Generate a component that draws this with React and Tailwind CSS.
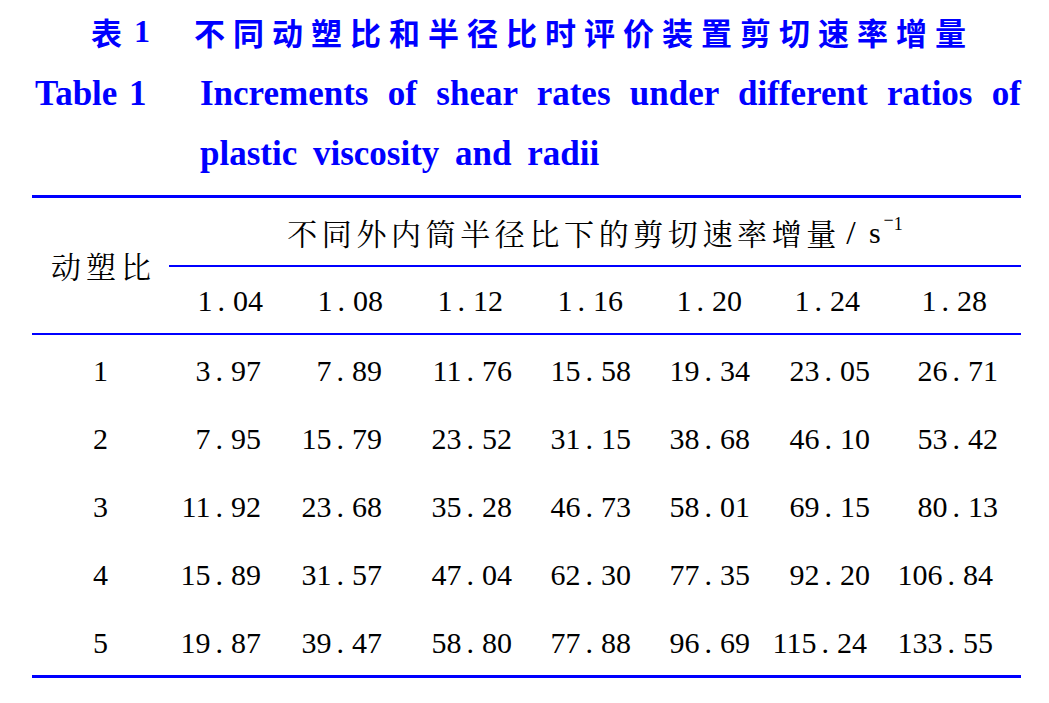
import React from "react";

const BLUE = "bg-[#0000ff]";

const headers = ["1.04", "1.08", "1.12", "1.16", "1.20", "1.24", "1.28"];
const rows = [
  ["1", "3.97", "7.89", "11.76", "15.58", "19.34", "23.05", "26.71"],
  ["2", "7.95", "15.79", "23.52", "31.15", "38.68", "46.10", "53.42"],
  ["3", "11.92", "23.68", "35.28", "46.73", "58.01", "69.15", "80.13"],
  ["4", "15.89", "31.57", "47.04", "62.30", "77.35", "92.20", "106.84"],
  ["5", "19.87", "39.47", "58.80", "77.88", "96.69", "115.24", "133.55"],
];

const padData = ["pr-[28px]", "pr-[27px]", "pr-[17px]", "pr-[18px]", "pr-[19px]", "pr-[19px]", "pr-[11px]"];
const padData6 = ["pr-[28px]", "pr-[27px]", "pr-[17px]", "pr-[18px]", "pr-[19px]", "pr-[22px]", "pr-[16px]"];
const padHead = ["pr-[26px]", "pr-[26px]", "pr-[26px]", "pr-[26px]", "pr-[27px]", "pr-[29px]", "pr-[22px]"];

function Num({ s }) {
  return (
    <span className="whitespace-nowrap">
      {s.split("").map((c, i) =>
        c === "." ? (
          <span key={i} className="inline-block pl-[5px] pr-[8px]">.</span>
        ) : (
          <span key={i}>{c}</span>
        )
      )}
    </span>
  );
}

export default function App() {
  return (
    <div className="w-[1049px] h-[703px] bg-white overflow-hidden text-black">
      {/* Chinese title */}
      <div className="h-[62px] flex items-center pl-[91px] text-[#0000ff] font-bold text-[31px] leading-none [font-family:'Noto_Sans_CJK_SC',sans-serif]">
        <span>表</span>
        <span className="ml-[12px] [font-family:'Liberation_Serif',serif] text-[32px]">1</span>
        <span className="ml-[44px] tracking-[8px]">不同动塑比和半径比时评价装置剪切速率增量</span>
      </div>

      {/* English title */}
      <div className="mt-[2px] flex text-[#0000ff] font-bold text-[35px] leading-[60px] [font-family:'Liberation_Serif',serif]">
        <div className="w-[200px] shrink-0 pl-[35px] whitespace-nowrap [word-spacing:3px]">Table 1</div>
        <div className="w-[821px] text-justify [word-spacing:7px]">
          Increments of shear rates under different ratios of plastic viscosity and radii
        </div>
      </div>

      {/* Table */}
      <div className="ml-[32px] w-[989px] mt-[11px]">
        <div className={`h-[3px] ${BLUE}`} />
        <div className="flex h-[135px]">
          <div className="w-[137px] shrink-0 flex items-center justify-center pl-[6px] text-[30px] tracking-[5px] [font-family:'Noto_Serif_CJK_SC','Noto_Sans_CJK_SC',serif]">
            动塑比
          </div>
          <div className="flex-1 flex flex-col">
            <div className="h-[67px] flex items-center justify-center pt-[2px] text-[30px] [font-family:'Noto_Serif_CJK_SC','Noto_Sans_CJK_SC',serif]">
              <span className="tracking-[4.6px]">不同外内筒半径比下的剪切速率增量</span>
              <span className="[font-family:'Liberation_Serif',serif] inline-block w-[20px] text-center text-[34px] leading-none">/</span>
              <span className="[font-family:'Liberation_Serif',serif] pl-[8px] pr-[3px]">s</span>
              <span className="[font-family:'Liberation_Serif',serif] text-[18px] relative -top-[8px]">
                <span className="relative -top-[4px]">−</span>1
              </span>
            </div>
            <div className={`h-[2px] ${BLUE}`} />
            <div className="h-[66px] flex items-center text-[30px] [font-family:'Liberation_Serif',serif]">
              {headers.map((h, i) => (
                <div key={i} className={`w-[120px] shrink-0 text-right ${padHead[i]}`}>
                  <Num s={h} />
                </div>
              ))}
            </div>
          </div>
        </div>
        <div className={`h-[2px] ${BLUE}`} />
        <div className="pt-[1px] text-[30px] [font-family:'Liberation_Serif',serif]">
          {rows.map((r, ri) => (
            <div key={ri} className="h-[68px] flex items-center">
              <div className="w-[137px] shrink-0 text-center">{r[0]}</div>
              {r.slice(1).map((v, i) => (
                <div
                  key={i}
                  className={`w-[120px] shrink-0 text-right ${v.length >= 6 ? padData6[i] : padData[i]}`}
                >
                  <Num s={v} />
                </div>
              ))}
            </div>
          ))}
        </div>
        <div className={`mt-[-1px] h-[3px] ${BLUE}`} />
      </div>
    </div>
  );
}
